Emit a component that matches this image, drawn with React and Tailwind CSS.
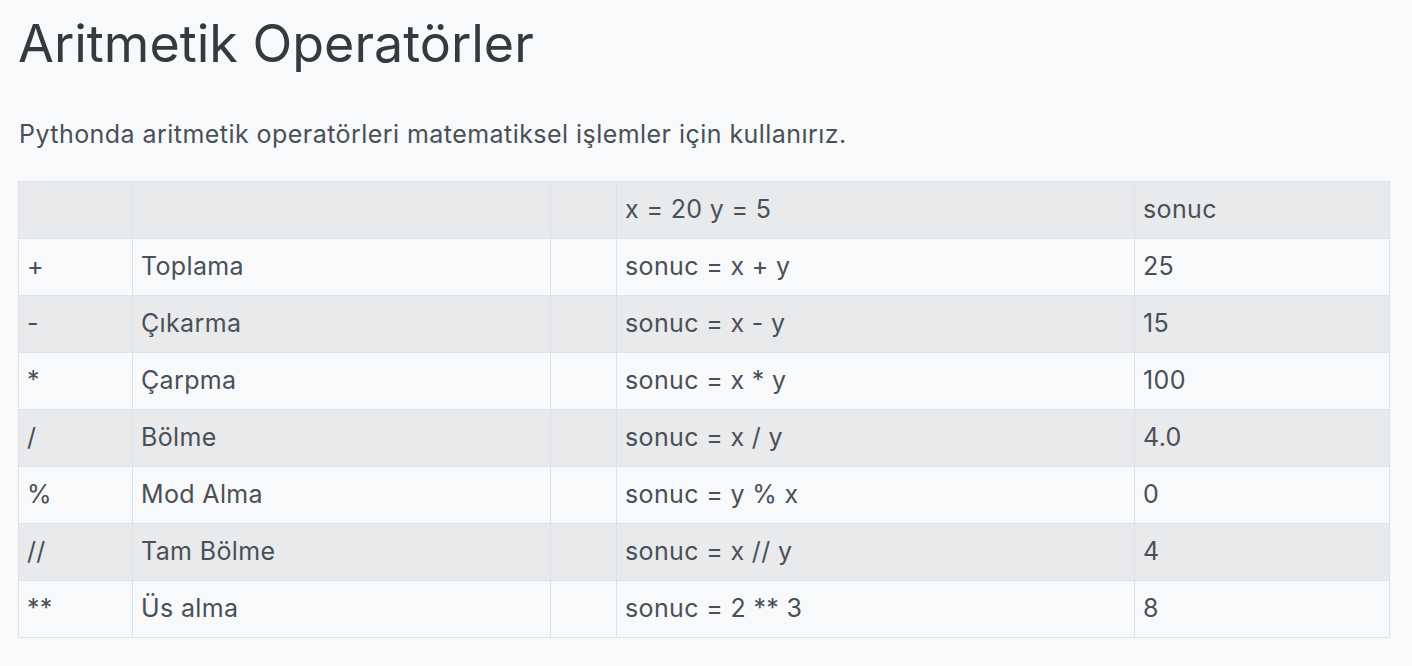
import React from 'react';

const rows = [
    ['+', 'Toplama', 'sonuc = x + y', '25'],
    ['-', 'Çıkarma', 'sonuc = x - y', '15'],
    ['*', 'Çarpma', 'sonuc = x * y', '100'],
    ['/', 'Bölme', 'sonuc = x / y', '4.0'],
    ['%', 'Mod Alma', 'sonuc = y % x', '0'],
    ['//', 'Tam Bölme', 'sonuc = x // y', '4'],
    ['**', 'Üs alma', 'sonuc = 2 ** 3', '8']
];

const cell = 'border border-[#dee2e6] px-[8px] h-[57px] align-middle';

const App = () => {
    return (
        <div className="min-h-screen bg-[#f8f9fa] text-[#495057] font-['Inter',sans-serif] px-[18px]">
            <h1 className="text-[#343a40] text-[52px] leading-[60px] pt-[14px] font-normal">
                Aritmetik Operatörler
            </h1>

            <p className="text-[25px] tracking-[0.45px] leading-8 mt-[44px] ml-px">
                Pythonda aritmetik operatörleri matematiksel işlemler için kullanırız.
            </p>

            <table className="mt-[31px] w-[1371px] border-collapse table-fixed text-[25px] tracking-[0.35px]">
                <colgroup>
                    <col className="w-[114px]" />
                    <col className="w-[418px]" />
                    <col className="w-[66px]" />
                    <col className="w-[518px]" />
                    <col className="w-[255px]" />
                </colgroup>
                <thead>
                    <tr className="bg-[#e9eaec]">
                        <th className={cell}></th>
                        <th className={cell}></th>
                        <th className={cell}></th>
                        <th className={`${cell} text-left font-normal`}>x = 20 y = 5</th>
                        <th className={`${cell} text-left font-normal`}>sonuc</th>
                    </tr>
                </thead>
                <tbody>
                    {rows.map((r, i) => (
                        <tr key={i} className={i % 2 === 1 ? 'bg-[#e9eaec]' : 'bg-[#f8f9fa]'}>
                            <td className={cell}>{r[0]}</td>
                            <td className={cell}>{r[1]}</td>
                            <td className={cell}></td>
                            <td className={cell}>{r[2]}</td>
                            <td className={cell}>{r[3]}</td>
                        </tr>
                    ))}
                </tbody>
            </table>
        </div>
    );
};

export default App;
